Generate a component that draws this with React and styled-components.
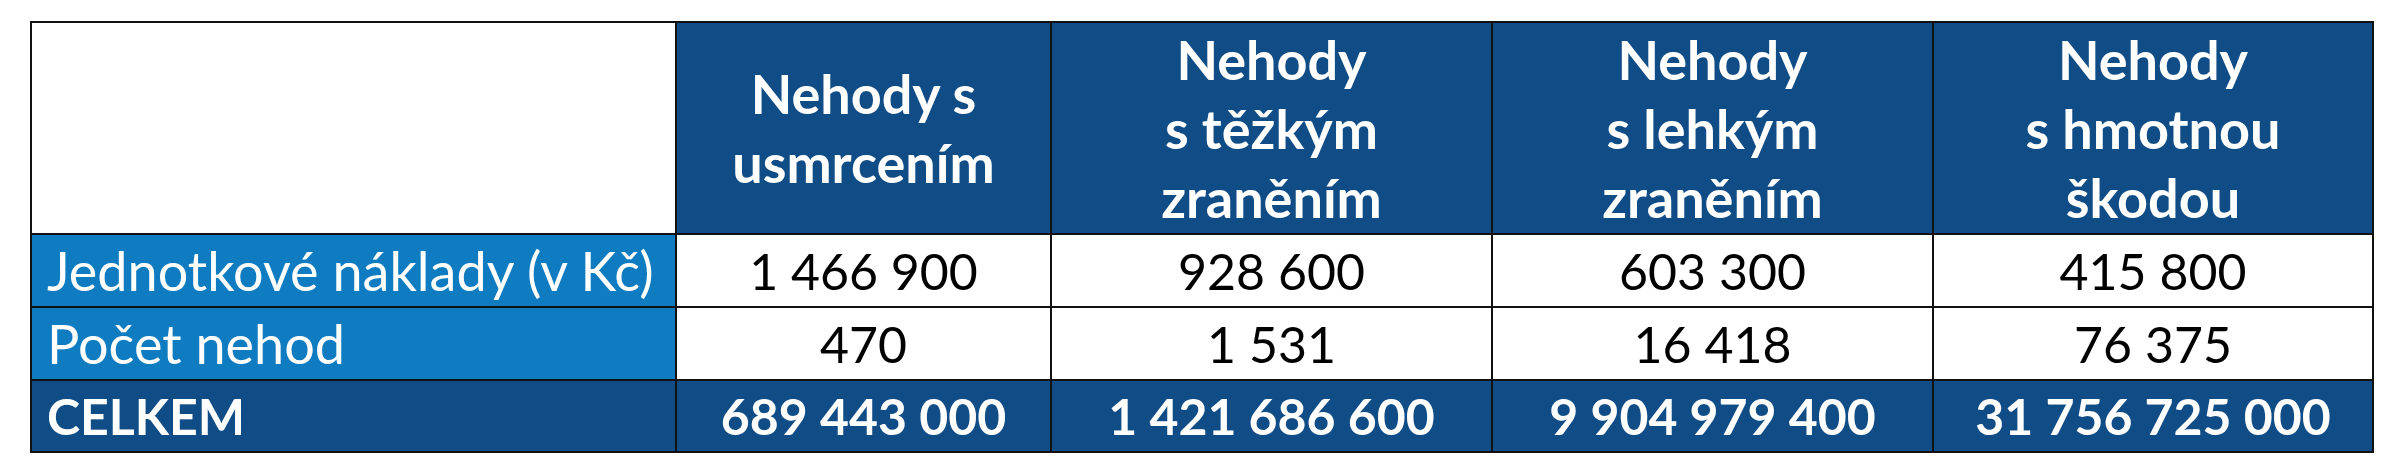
import React from "react";
import styled, { createGlobalStyle } from "styled-components";

const GlobalStyle = createGlobalStyle`
  html, body { margin: 0; padding: 0; background: #ffffff; }
  body { font-family: Lato, "Open Sans", "Noto Sans", sans-serif; }
`;

const Page = styled.div`
  padding: 21px 0 0 30px;
`;

const Grid = styled.div`
  display: grid;
  grid-template-columns: 645px 375px 441px 441px 440px;
  grid-template-rows: 212px 73px 73px 72px;
  width: max-content;
  border-top: 2px solid #111;
  border-left: 2px solid #111;
  font-family: Lato, "Open Sans", sans-serif;
`;

const Cell = styled.div`
  box-sizing: border-box;
  border-right: 2px solid #111;
  border-bottom: 2px solid #111;
  display: flex;
  align-items: center;
  font-size: 50px;
  overflow: hidden;
  white-space: nowrap;
`;

const Corner = styled(Cell)`
  background: #ffffff;
`;

const HeadCell = styled(Cell)`
  background: #104c85;
  color: #ffffff;
  font-weight: 700;
  font-size: 54px;
  justify-content: center;
  text-align: center;
  line-height: 69px;
  flex-direction: column;
`;

const HeadLine = styled.span`
  display: block;
`;

const LabelCell = styled(Cell)`
  background: ${(p) => (p.$total ? "#104c85" : "#0f7cc1")};
  color: #ffffff;
  font-weight: ${(p) => (p.$total ? 700 : 400)};
  font-size: ${(p) => (p.$total ? "50px" : "54px")};
  padding-left: 15px;
`;

const ValueCell = styled(Cell)`
  background: ${(p) => (p.$total ? "#104c85" : "#ffffff")};
  color: ${(p) => (p.$total ? "#ffffff" : "#000000")};
  font-weight: ${(p) => (p.$total ? 700 : 400)};
  justify-content: center;
`;

const headers = [
  ["Nehody s", "usmrcením"],
  ["Nehody", "s těžkým", "zraněním"],
  ["Nehody", "s lehkým", "zraněním"],
  ["Nehody", "s hmotnou", "škodou"],
];

const rows = [
  { label: "Jednotkové náklady (v Kč)", values: ["1 466 900", "928 600", "603 300", "415 800"] },
  { label: "Počet nehod", values: ["470", "1 531", "16 418", "76 375"] },
  { label: "CELKEM", total: true, values: ["689 443 000", "1 421 686 600", "9 904 979 400", "31 756 725 000"] },
];

export default function App() {
  return (
    <Page>
      <GlobalStyle />
      <Grid role="table">
        <Corner role="columnheader" />
        {headers.map((lines, i) => (
          <HeadCell role="columnheader" key={i}>
            {lines.map((l, j) => (
              <HeadLine key={j}>{l}</HeadLine>
            ))}
          </HeadCell>
        ))}
        {rows.map((r) => (
          <React.Fragment key={r.label}>
            <LabelCell role="rowheader" $total={r.total}>{r.label}</LabelCell>
            {r.values.map((v, i) => (
              <ValueCell role="cell" key={i} $total={r.total}>{v}</ValueCell>
            ))}
          </React.Fragment>
        ))}
      </Grid>
    </Page>
  );
}
